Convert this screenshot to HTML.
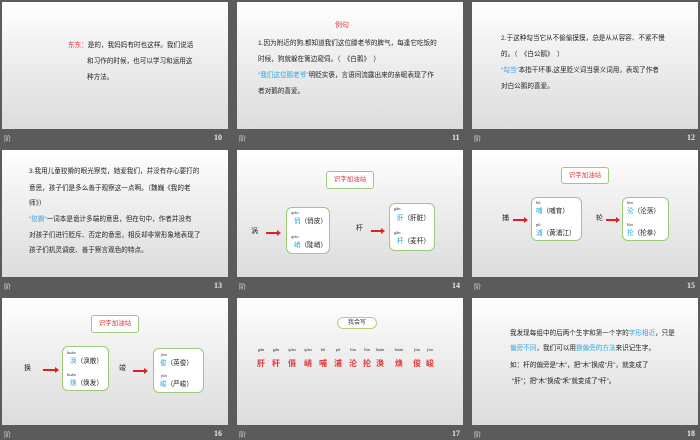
<!DOCTYPE html>
<html><head><meta charset="utf-8"><style>
*{margin:0;padding:0;box-sizing:border-box}
body{width:700px;height:438px;background:#5b5b5b;position:relative;overflow:hidden;font-family:"Liberation Sans","Noto Sans CJK SC",sans-serif;}
.s{position:absolute;width:226px;height:127px;background:linear-gradient(#ffffff,#f3f3f3 30%,#dcdcdc);overflow:hidden}
.ft{position:absolute;font-size:7px;color:#e8e8e8;font-family:"Liberation Serif","Noto Serif CJK SC",serif}
.n{font-weight:bold;font-size:8px}
.t{position:absolute;font-size:6.6px;color:#222;white-space:nowrap;line-height:8px}
.r{color:#e53333}.b{color:#2aa7e0}
.box{position:absolute;border:1px solid #9cc97a;border-radius:6px;background:#fff}
.tb{position:absolute;border:1px solid #9cc97a;border-radius:3px;background:#fff;color:#e53333;font-size:6.5px;text-align:center}
.ar{position:absolute;height:2px;background:#e02020}
.ar:after{content:"";position:absolute;right:-3px;top:-2px;border-left:4px solid #e02020;border-top:3px solid transparent;border-bottom:3px solid transparent}
.py{position:absolute;font-size:4.5px;color:#333;font-family:"Liberation Serif",serif}
.c{position:absolute;top:60px;font-size:8px;font-weight:bold;color:#e53333;transform:translateX(-50%)}
.p{position:absolute;top:49px;font-size:4.5px;color:#333;font-family:"Liberation Serif",serif;transform:translateX(-50%)}
</style></head><body>

<!-- slide 10 -->
<div class="s" style="left:2px;top:2px">
<div class="t" style="left:66px;top:40px"><span class="r">东东：</span>是的，我妈妈有时也这样。我们说话</div>
<div class="t" style="left:85px;top:56px">和习作的时候，也可以学习和运用这</div>
<div class="t" style="left:85px;top:72px">种方法。</div>
</div>
<div class="ft" style="left:4px;top:134px">阶</div><div class="ft n" style="left:214px;top:133px">10</div>

<!-- slide 11 -->
<div class="s" style="left:237px;top:2px">
<div class="t r" style="left:98px;top:20px;font-size:7px">例句</div>
<div class="t" style="left:21px;top:38px">1.因为附近的狗,都知道我们这位滕老爷的脾气，每逢它吃饭的</div>
<div class="t" style="left:21px;top:54px">时候，狗就躲在篱边窥伺。（　《白鹅》　）</div>
<div class="t" style="left:21px;top:70px"><span class="b">“我们这位鹅老爷”</span>明贬实褒，言语间流露出来的亲昵表现了作</div>
<div class="t" style="left:21px;top:86px">者对鹅的喜爱。</div>
</div>
<div class="ft" style="left:239px;top:134px">阶</div><div class="ft n" style="left:452px;top:133px">11</div>

<!-- slide 12 -->
<div class="s" style="left:472px;top:2px">
<div class="t" style="left:29px;top:33px">2.于这种勾当它从不偷偷摸摸，总是从从容容、不紧不慢</div>
<div class="t" style="left:29px;top:49px">的。（　《白公鹅》　）</div>
<div class="t" style="left:29px;top:65px"><span class="b">“勾当”</span>本指干坏事,这里贬义词当褒义词用，表现了作者</div>
<div class="t" style="left:29px;top:81px">对白公鹅的喜爱。</div>
</div>
<div class="ft" style="left:474px;top:134px">阶</div><div class="ft n" style="left:687px;top:133px">12</div>

<!-- slide 13 -->
<div class="s" style="left:2px;top:150px">
<div class="t" style="left:27px;top:18px">3.我用儿童狡猾的眼光察觉，她爱我们，并没有存心要打的</div>
<div class="t" style="left:27px;top:35px">意思，孩子们是多么善于观察这一点啊。（魏巍《我的老</div>
<div class="t" style="left:27px;top:50px">师》）</div>
<div class="t" style="left:27px;top:66px"><span class="b">“狡猾”</span>一词本是诡计多端的意思，但在句中，作者并没有</div>
<div class="t" style="left:27px;top:82px">对孩子们进行贬斥、否定的意思，相反却非常形象地表现了</div>
<div class="t" style="left:27px;top:97px">孩子们机灵调皮、善于察言观色的特点。</div>
</div>
<div class="ft" style="left:4px;top:282px">阶</div><div class="ft n" style="left:214px;top:281px">13</div>

<!-- slide 14 -->
<div class="s" style="left:237px;top:150px">
<div class="tb" style="left:89px;top:21px;width:48px;height:18px;line-height:16px">识字加油站</div>
<div class="t" style="left:14px;top:78px;font-size:7px">涡</div>
<div class="ar" style="left:29px;top:82px;width:12px"></div>
<div class="box" style="left:49px;top:57px;width:44px;height:47px"></div>
<div class="py" style="left:54px;top:60px">qiào</div>
<div class="t" style="left:57px;top:68px"><span class="b">俏</span>（俏皮）</div>
<div class="py" style="left:54px;top:84px">qiào</div>
<div class="t" style="left:57px;top:92px"><span class="b">峭</span>（陡峭）</div>
<div class="t" style="left:119px;top:75px;font-size:7px">杆</div>
<div class="ar" style="left:134px;top:80px;width:11px"></div>
<div class="box" style="left:152px;top:53px;width:46px;height:48px"></div>
<div class="py" style="left:157px;top:56px">gǎn</div>
<div class="t" style="left:160px;top:65px"><span class="b">肝</span>（肝脏）</div>
<div class="py" style="left:157px;top:80px">gǎn</div>
<div class="t" style="left:160px;top:88px"><span class="b">杆</span>（麦杆）</div>
</div>
<div class="ft" style="left:239px;top:282px">阶</div><div class="ft n" style="left:452px;top:281px">14</div>

<!-- slide 15 -->
<div class="s" style="left:472px;top:150px">
<div class="tb" style="left:89px;top:17px;width:48px;height:17px;line-height:15px">识字加油站</div>
<div class="t" style="left:30px;top:65px;font-size:7px">捕</div>
<div class="ar" style="left:41px;top:69px;width:12px"></div>
<div class="box" style="left:59px;top:47px;width:51px;height:44px"></div>
<div class="py" style="left:64px;top:50px">bǔ</div>
<div class="t" style="left:64px;top:58px"><span class="b">哺</span>（哺育）</div>
<div class="py" style="left:64px;top:72px">pǔ</div>
<div class="t" style="left:64px;top:80px"><span class="b">浦</span>（黄浦江）</div>
<div class="t" style="left:124px;top:65px;font-size:7px">轮</div>
<div class="ar" style="left:134px;top:69px;width:11px"></div>
<div class="box" style="left:150px;top:47px;width:47px;height:44px"></div>
<div class="py" style="left:155px;top:50px">lún</div>
<div class="t" style="left:155px;top:58px"><span class="b">沦</span>（沦落）</div>
<div class="py" style="left:155px;top:72px">lūn</div>
<div class="t" style="left:155px;top:80px"><span class="b">抡</span>（抡拳）</div>
</div>
<div class="ft" style="left:474px;top:282px">阶</div><div class="ft n" style="left:687px;top:281px">15</div>

<!-- slide 16 -->
<div class="s" style="left:2px;top:298px">
<div class="tb" style="left:89px;top:17px;width:48px;height:18px;line-height:16px">识字加油站</div>
<div class="t" style="left:22px;top:67px;font-size:7px">换</div>
<div class="ar" style="left:41px;top:71px;width:13px"></div>
<div class="box" style="left:60px;top:48px;width:47px;height:45px"></div>
<div class="py" style="left:65px;top:52px">huàn</div>
<div class="t" style="left:68px;top:60px"><span class="b">涣</span>（涣散）</div>
<div class="py" style="left:65px;top:74px">huàn</div>
<div class="t" style="left:68px;top:82px"><span class="b">焕</span>（焕发）</div>
<div class="t" style="left:117px;top:67px;font-size:7px">竣</div>
<div class="ar" style="left:131px;top:72px;width:12px"></div>
<div class="box" style="left:151px;top:50px;width:51px;height:45px"></div>
<div class="py" style="left:159px;top:54px">jùn</div>
<div class="t" style="left:158px;top:62px"><span class="b">俊</span>（英俊）</div>
<div class="py" style="left:159px;top:75px">jùn</div>
<div class="t" style="left:158px;top:83px"><span class="b">峻</span>（严峻）</div>
</div>
<div class="ft" style="left:4px;top:430px">阶</div><div class="ft n" style="left:214px;top:429px">16</div>

<!-- slide 17 -->
<div class="s" style="left:237px;top:298px">
<div class="t" style="left:100px;top:19px;width:40px;height:12px;border:1px solid #b8cf7a;border-radius:6px;background:#fff;text-align:center;line-height:10px;font-size:6px;color:#333">我会写</div>
<span class="p" style="left:24px">gān</span><span class="c" style="left:24px">肝</span>
<span class="p" style="left:39px">gǎn</span><span class="c" style="left:39px">秆</span>
<span class="p" style="left:55px">qiào</span><span class="c" style="left:55px">俏</span>
<span class="p" style="left:71px">qiào</span><span class="c" style="left:71px">峭</span>
<span class="p" style="left:86px">bǔ</span><span class="c" style="left:86px">哺</span>
<span class="p" style="left:101px">pǔ</span><span class="c" style="left:101px">浦</span>
<span class="p" style="left:116px">lún</span><span class="c" style="left:116px">沦</span>
<span class="p" style="left:130px">lūn</span><span class="c" style="left:130px">抡</span>
<span class="p" style="left:143px">huàn</span><span class="c" style="left:143px">涣</span>
<span class="p" style="left:162px">huàn</span><span class="c" style="left:162px">焕</span>
<span class="p" style="left:180px">jùn</span><span class="c" style="left:180px">俊</span>
<span class="p" style="left:193px">jùn</span><span class="c" style="left:193px">峻</span>
</div>
<div class="ft" style="left:239px;top:430px">阶</div><div class="ft n" style="left:452px;top:429px">17</div>

<!-- slide 18 -->
<div class="s" style="left:472px;top:298px">
<div class="t" style="left:38px;top:32px">我发现每组中的后两个生字和第一个字的<span class="b">字形相近</span>，只是</div>
<div class="t" style="left:38px;top:47px"><span class="b">偏旁不同</span>，我们可以用<span class="b">换偏旁的方法</span>来识记生字。</div>
<div class="t" style="left:38px;top:64px">如：杆的偏旁是“木”，把“木”换成“月”，就变成了</div>
<div class="t" style="left:40px;top:80px">“肝”；把“木”换成“禾”就变成了“秆”。</div>
</div>
<div class="ft" style="left:474px;top:430px">阶</div><div class="ft n" style="left:687px;top:429px">18</div>

</body></html>
